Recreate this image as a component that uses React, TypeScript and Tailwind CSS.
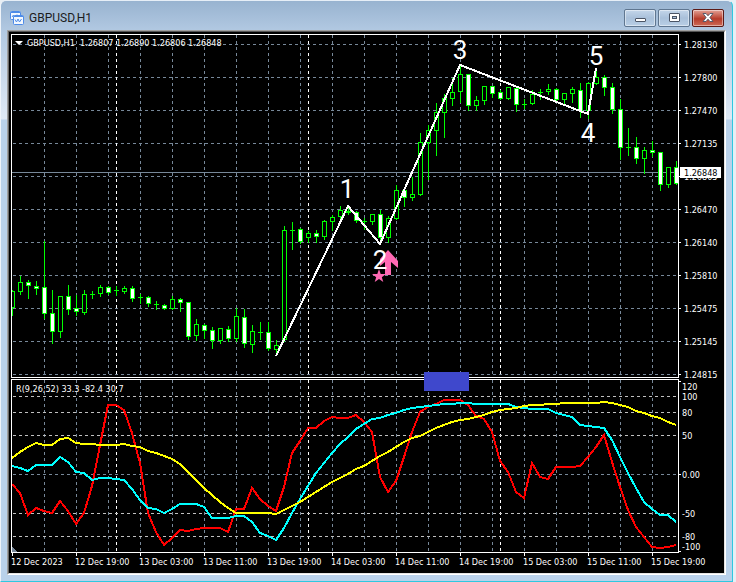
import React from "react";

const LIME = "#00ff00";
const SLATE = "#778899";
const SILVER = "#c0c0c0";

// plot boxes, in chart units
const PRICE = { x: 11, y: 34, w: 668, h: 344 };
const OSC = { x: 11, y: 379, w: 668, h: 174 };

type Box = { x: number; y: number; w: number; h: number };

const px = (box: Box, x: number) => `${((x - box.x) / box.w) * 100}%`;
const py = (box: Box, y: number) => `${((y - box.y) / box.h) * 100}%`;

// high, body top, body bottom, low, kind: u = up, d = down, x = doji
type Candle = [number, number, number, number, "u" | "d" | "x"];

const candles: Candle[] = [
  [290, 291, 308, 315, "u"],
  [276, 282, 292, 294, "u"],
  [280, 282, 286, 298, "d"],
  [281, 286, 289, 294, "d"],
  [241, 287, 314, 318, "d"],
  [290, 313, 332, 343, "d"],
  [296, 296, 332, 337, "u"],
  [285, 296, 310, 314, "d"],
  [295, 308, 312, 315, "d"],
  [290, 294, 313, 314, "u"],
  [291, 294, 294, 298, "x"],
  [285, 287, 294, 296, "u"],
  [286, 287, 293, 294, "d"],
  [286, 290, 290, 295, "x"],
  [286, 288, 292, 293, "u"],
  [286, 288, 299, 301, "d"],
  [294, 297, 297, 303, "x"],
  [296, 297, 304, 306, "d"],
  [301, 304, 304, 309, "x"],
  [304, 305, 309, 309, "d"],
  [296, 299, 309, 309, "u"],
  [298, 299, 303, 311, "d"],
  [302, 302, 337, 339, "d"],
  [319, 324, 336, 340, "u"],
  [324, 325, 331, 338, "d"],
  [327, 330, 341, 348, "d"],
  [328, 328, 341, 343, "u"],
  [326, 329, 339, 341, "d"],
  [308, 316, 339, 341, "u"],
  [309, 317, 344, 347, "d"],
  [325, 331, 345, 352, "u"],
  [322, 332, 332, 339, "x"],
  [322, 332, 349, 350, "d"],
  [340, 345, 350, 355, "u"],
  [226, 230, 340, 341, "u"],
  [222, 230, 230, 249, "x"],
  [228, 229, 242, 243, "d"],
  [231, 233, 238, 242, "u"],
  [230, 233, 237, 242, "d"],
  [220, 221, 237, 239, "u"],
  [215, 217, 222, 230, "u"],
  [206, 210, 217, 220, "u"],
  [206, 211, 213, 214, "u"],
  [211, 212, 221, 222, "d"],
  [218, 221, 221, 229, "x"],
  [214, 214, 222, 224, "u"],
  [210, 214, 238, 243, "d"],
  [216, 218, 238, 242, "u"],
  [185, 190, 219, 219, "u"],
  [187, 190, 198, 206, "d"],
  [177, 194, 198, 200, "u"],
  [133, 142, 195, 195, "u"],
  [125, 130, 143, 179, "u"],
  [103, 112, 131, 155, "u"],
  [94, 98, 113, 137, "u"],
  [78, 92, 99, 105, "u"],
  [65, 74, 92, 102, "u"],
  [74, 74, 106, 110, "d"],
  [96, 100, 106, 110, "u"],
  [86, 86, 101, 104, "u"],
  [86, 86, 94, 97, "d"],
  [90, 92, 99, 99, "d"],
  [87, 87, 99, 99, "u"],
  [88, 88, 105, 111, "d"],
  [99, 104, 104, 108, "x"],
  [90, 94, 104, 104, "u"],
  [89, 92, 92, 99, "x"],
  [84, 89, 92, 94, "u"],
  [88, 89, 100, 100, "d"],
  [93, 93, 100, 104, "u"],
  [87, 89, 94, 102, "u"],
  [83, 90, 111, 117, "d"],
  [82, 83, 111, 118, "u"],
  [68, 77, 84, 84, "u"],
  [75, 77, 88, 95, "d"],
  [83, 87, 110, 113, "d"],
  [99, 109, 148, 159, "d"],
  [128, 147, 147, 155, "x"],
  [137, 147, 159, 163, "d"],
  [147, 150, 159, 173, "u"],
  [141, 150, 153, 156, "d"],
  [152, 152, 185, 190, "d"],
  [167, 167, 185, 187, "u"],
  [161, 167, 184, 184, "d"],
];

const red = [
  484, 493, 515, 508, 511, 513, 501, 511, 524, 513, 486, 445, 405, 405, 410, 433, 463, 513, 532, 545, 538, 530,
  531, 529, 528, 528, 528, 532, 509, 509, 488, 499, 506, 511, 487, 453, 441, 428, 428, 421, 417, 418, 418, 415,
  422, 432, 477, 492, 481, 457, 432, 412, 407, 404, 400, 400, 400, 405, 416, 419, 432, 461, 472, 492, 498, 463,
  477, 479, 467, 467, 467, 466, 457, 447, 435, 462, 487, 510, 527, 537, 547, 548, 547, 545,
];

const cyan = [
  466, 468, 471, 465, 465, 465, 457, 462, 472, 473, 480, 478, 478, 479, 480, 489, 500, 508, 509, 513, 509, 504,
  504, 504, 507, 518, 518, 518, 516, 516, 522, 533, 536, 540, 528, 513, 499, 486, 473, 463, 453, 444, 437, 429,
  424, 419, 418, 415, 413, 410, 408, 407, 406, 405, 404, 404, 403, 403, 404, 404, 404, 404, 404, 407, 408, 409,
  409, 409, 413, 415, 417, 425, 426, 427, 428, 440, 457, 473, 488, 502, 509, 515, 515, 522,
];

const yellow = [
  458, 452, 447, 443, 445, 445, 439, 438, 443, 444, 444, 445, 445, 445, 444, 446, 447, 451, 453, 456, 459, 464,
  472, 480, 488, 495, 502, 508, 513, 513, 513, 513, 513, 514, 510, 506, 502, 497, 492, 487, 482, 478, 474, 469,
  466, 461, 456, 452, 447, 442, 438, 436, 432, 428, 425, 422, 420, 419, 417, 415, 412, 410, 409, 408, 406, 405,
  405, 404, 404, 403, 403, 403, 403, 403, 402, 403, 405, 407, 411, 413, 416, 418, 422, 425,
];

const priceTicks: [string, number][] = [
  ["1.28130", 44],
  ["1.27800", 77],
  ["1.27470", 110],
  ["1.27135", 143],
  ["1.26805", 176],
  ["1.26470", 209],
  ["1.26140", 242],
  ["1.25810", 275],
  ["1.25475", 308],
  ["1.25145", 341],
  ["1.24815", 374],
];

const oscTicks: [string, number][] = [
  ["120", 386],
  ["100", 396],
  ["80", 412],
  ["50", 435],
  ["0.00", 474],
  ["-50", 513],
  ["-80", 536],
  ["-100", 546],
];

const times = [
  "12 Dec 2023",
  "12 Dec 19:00",
  "13 Dec 03:00",
  "13 Dec 11:00",
  "13 Dec 19:00",
  "14 Dec 03:00",
  "14 Dec 11:00",
  "14 Dec 19:00",
  "15 Dec 03:00",
  "15 Dec 11:00",
  "15 Dec 19:00",
];

const waves: [string, number, number][] = [
  ["1", 347, 198],
  ["2", 380, 269],
  ["3", 460, 59],
  ["4", 588, 142],
  ["5", 596, 65],
];

const toPoints = (ys: number[]) => ys.map((y, i) => `${12 + i * 8},${y}`).join(" ");

const Dashed = ({ x1, y1, x2, y2, color }: { x1: number; y1: number; x2: number; y2: number; color: string }) => (
  <line x1={x1} y1={y1} x2={x2} y2={y2} stroke={color} strokeDasharray="3 3" />
);

const VerticalGrid = ({ top, bottom }: { top: number; bottom: number }) => (
  <>
    {Array.from({ length: 20 }, (_, i) => 44.5 + i * 32).map((x) => (
      <Dashed key={x} x1={x} y1={top} x2={x} y2={bottom} color={SLATE} />
    ))}
    {[116.5, 308.5, 500.5].map((x) => (
      <Dashed key={x} x1={x} y1={top} x2={x} y2={bottom} color="#ffffff" />
    ))}
  </>
);

const Frame = ({ box }: { box: Box }) => (
  <rect x={box.x + 0.5} y={box.y + 0.5} width={box.w - 1} height={box.h - 1} fill="none" stroke="#fff" />
);

const CandleShape = ({ x, data }: { x: number; data: Candle }) => {
  const [high, top, bottom, low, kind] = data;
  return (
    <g>
      <rect x={x} y={high} width={1} height={low - high + 1} fill={LIME} />
      {kind === "x" ? (
        <rect x={x - 2} y={top} width={5} height={1} fill={LIME} />
      ) : (
        <rect
          x={x - 1.5}
          y={top + 0.5}
          width={4}
          height={bottom - top - 1}
          fill={kind === "u" ? "#000" : "#fff"}
          stroke={LIME}
        />
      )}
    </g>
  );
};

const PricePlot = () => (
  <svg className="h-full min-w-0 flex-1" role="img" aria-label="GBPUSD price chart">
    <svg
      width="100%"
      height="100%"
      viewBox="11 34 668 344"
      preserveAspectRatio="none"
      shapeRendering="crispEdges"
    >
      {priceTicks.map(([label, y]) => (
        <Dashed key={label} x1={13} y1={y + 0.5} x2={678} y2={y + 0.5} color={SLATE} />
      ))}
      <VerticalGrid top={35} bottom={377} />
      <line x1="12" y1="172.5" x2="678" y2="172.5" stroke={SLATE} />
      {candles.map((c, i) => (
        <CandleShape key={i} x={12 + i * 8} data={c} />
      ))}
      <polyline
        points="276,356 348,206 380,244 460,65 588,114 596,68"
        fill="none"
        stroke="#fff"
        strokeWidth="2"
      />
      <g fill="#ff69b4" shapeRendering="auto">
        <path d="M388 250 L398 261 V268 L391 262 V275 H385 V262 L380 266 V259 Z" />
        <path d="M379 269 L380.7 274 L386 274 L381.8 277.2 L383.3 282 L379 279 L374.7 282 L376.2 277.2 L372 274 L377.3 274 Z" />
      </g>
      <Frame box={PRICE} />
    </svg>
    <path d="M4 7 H12 L8 11 Z" fill="#fff" />
    <text x="16" y="12" fill="#fff" fontSize="9">
      GBPUSD,H1 {"\u00a0"}1.26807 1.26890 1.26806 1.26848
    </text>
    <g fontFamily="Roboto, sans-serif" fontSize="26" fill="#fff" textAnchor="middle">
      {waves.map(([n, x, y]) => (
        <text key={n} x={px(PRICE, x)} y={py(PRICE, y)}>
          {n}
        </text>
      ))}
    </g>
  </svg>
);

const PriceAxis = () => (
  <svg className="h-full w-[45px] shrink-0 overflow-visible" fontSize="9" fill="#fff">
    {priceTicks.map(([label, y]) => (
      <React.Fragment key={label}>
        <rect x="0" y={py(PRICE, y)} width="2" height="1" />
        <text x="5" y={py(PRICE, y + 4)}>
          {label}
        </text>
      </React.Fragment>
    ))}
    <rect x="1" y={py(PRICE, 167)} width="41" height="11" />
    <text x="5" y={py(PRICE, 176)} fill="#000">
      1.26848
    </text>
  </svg>
);

const OscPlot = () => (
  <svg className="h-full min-w-0 flex-1 overflow-visible" role="img" aria-label="R oscillator">
    <svg
      width="100%"
      height="100%"
      viewBox="11 379 668 174"
      preserveAspectRatio="none"
      shapeRendering="crispEdges"
      overflow="visible"
    >
      <VerticalGrid top={380} bottom={552} />
      {[396, 412, 435, 474, 513, 536].map((y) => (
        <Dashed key={y} x1={13} y1={y + 0.5} x2={678} y2={y + 0.5} color={y === 474 ? SLATE : SILVER} />
      ))}
      <g fill="none" strokeWidth="2">
        <polyline points={toPoints(red)} stroke="#ff0000" />
        <polyline points={toPoints(cyan)} stroke="#00ffff" />
        <polyline points={toPoints(yellow)} stroke="#ffff00" />
      </g>
      <path d="M12 547 L17 552 H12 Z" fill={SLATE} />
      <Frame box={OSC} />
      <rect x="424" y="372" width="45" height="19" fill="#3f48cc" />
    </svg>
    <text x="5" y="13" fill="#fff" fontSize="9">
      R(9,26,52) 33.3 -82.4 30.7
    </text>
  </svg>
);

const OscAxis = () => (
  <svg className="h-full w-[45px] shrink-0" fontSize="9" fill="#fff">
    {[381, 474, 551].map((y) => (
      <rect key={y} x="0" y={py(OSC, y)} width="2" height="1" />
    ))}
    {oscTicks.map(([label, y]) => (
      <text key={label} x="3" y={py(OSC, y + 4)}>
        {label}
      </text>
    ))}
  </svg>
);

const TimeAxis = () => (
  <div className="flex h-5 pr-[45px]">
    <svg className="h-full min-w-0 flex-1 overflow-visible" fontSize="9" fill="#fff">
      {times.map((t, i) => (
        <React.Fragment key={t}>
          <rect x={px(PRICE, 12 + i * 64)} y="0" width="1" height="3" />
          <text x={px(PRICE, 11 + i * 64)} y="12">
            {t}
          </text>
        </React.Fragment>
      ))}
    </svg>
  </div>
);

const ChartIcon = () => (
  <svg width="14" height="14" viewBox="0 0 14 14" fill="#f4f9ff" stroke="#4d8be8" aria-hidden="true">
    <rect x="0.5" y="0.5" width="10" height="8" rx="1" />
    <path d="M1 1.5 H10" />
    <path d="M2 6 L3.5 4 L5 6 L7 3.5" fill="none" />
    <rect x="3.5" y="4.5" width="10" height="9" rx="1" />
    <path d="M4 5.5 H13" />
    <path d="M5 8.5 L6.5 11 L8 8 L9.5 11 L11.5 8" fill="none" />
  </svg>
);

const capButton =
  "flex h-[18px] w-8 items-center justify-center rounded-xs border shadow-[inset_0_0_0_1px_rgba(255,255,255,0.45)]";
const blueButton = "border-[#5f7690] bg-linear-to-b from-[#c4d6ea] via-[#a9c0da] via-50% to-[#b9cfe6]";

const TitleBar = () => (
  <header className="flex h-[29px] items-center gap-[5px] pt-[5px] pr-[2px] pl-[3px]">
    <ChartIcon />
    <h1 className="flex-1 text-[12px] leading-4 text-[#1c1c1c]">GBPUSD,H1</h1>
    <div className="flex gap-[2px]">
      <button type="button" aria-label="Minimize" className={`${capButton} ${blueButton}`}>
        <svg width="12" height="12" viewBox="0 0 12 12">
          <rect x="1.5" y="6.5" width="10" height="3" rx="0.5" fill="#fff" stroke="#4b5566" />
        </svg>
      </button>
      <button type="button" aria-label="Maximize" className={`${capButton} ${blueButton}`}>
        <svg width="12" height="12" viewBox="0 0 12 12" fill="#fff" stroke="#4b5566">
          <rect x="1.5" y="1.5" width="10" height="8" rx="0.5" />
          <rect x="4.5" y="4.5" width="4" height="2" fill="#a9c0da" />
        </svg>
      </button>
      <button
        type="button"
        aria-label="Close"
        className={`${capButton} border-[#5c1a16] bg-linear-to-b from-[#e3a196] via-[#b63a29] via-55% to-[#cd6a56]`}
      >
        <svg width="12" height="12" viewBox="0 0 12 12">
          <path
            d="M1 1.5 H4 L6 3.8 L8 1.5 H11 L7.9 5.5 L11 9.5 H8 L6 7.2 L4 9.5 H1 L4.1 5.5 Z"
            fill="#fff"
            stroke="#4b5566"
            strokeWidth="0.9"
          />
        </svg>
      </button>
    </div>
  </header>
);

export default function App() {
  return (
    <div className="h-screen bg-[#e8eef4] pr-[3px] font-['Roboto','Liberation_Sans',sans-serif]">
      <main className="flex h-full flex-col rounded-t-md border-t border-r border-b border-l border-t-[#e6eef7] border-r-[#2fc8e0] border-b-[#2fc8e0] border-l-[#eef3f9] bg-[linear-gradient(to_bottom,#98b3d0_0px,#b2c9e2_30px,#dfe9f5_118px,#b9d1ea_119px)] px-[6px] pb-[6px]">
        <TitleBar />
        <section className="flex min-h-0 flex-1 flex-col border border-t-[#a0a0a0] border-r-white border-b-white border-l-[#a0a0a0] bg-black font-['DejaVu_Sans_Condensed','DejaVu_Sans',sans-serif]">
          <div className="flex min-h-0 flex-1 flex-col border border-t-[#555] border-r-[#e3e3e3] border-b-[#e3e3e3] border-l-[#696969] pt-[2px] pl-[2px]">
            <div className="flex min-h-0 flex-1 flex-col gap-px">
              <div className="flex min-h-0 grow-[344] basis-0">
                <PricePlot />
                <PriceAxis />
              </div>
              <div className="flex min-h-0 grow-[174] basis-0">
                <OscPlot />
                <OscAxis />
              </div>
            </div>
            <TimeAxis />
          </div>
        </section>
      </main>
    </div>
  );
}
